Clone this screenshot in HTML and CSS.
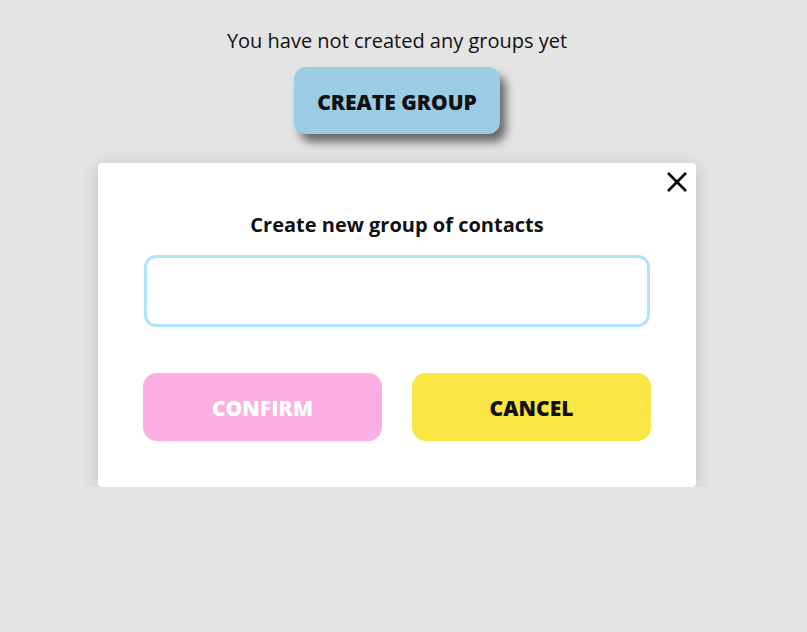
FILE: index.html
```html
<!DOCTYPE html>
<html>
<head>
<meta charset="utf-8">
<link rel="stylesheet" href="styles.css">
</head>
<body>
<main class="page">
  <p class="empty">You have not created any groups yet</p>
  <button class="create-btn">CREATE GROUP</button>
  <div class="modal">
    <button class="close" aria-label="Close">
      <svg width="22" height="22" viewBox="0 0 22 22"><path d="M2 2 L20 20 M20 2 L2 20" stroke="#000" stroke-width="2.6" fill="none"/></svg>
    </button>
    <h2 class="title">Create new group of contacts</h2>
    <input class="name-input" type="text">
    <div class="actions">
      <button class="btn confirm">CONFIRM</button>
      <button class="btn cancel">CANCEL</button>
    </div>
  </div>
</main>
</body>
</html>
```
FILE: styles.css
```css
html, body {
  margin: 0;
  padding: 0;
  background: #e4e4e4;
  font-family: "Open Sans", "Noto Sans", sans-serif;
}
.page {
  width: 794px;
  display: flex;
  flex-direction: column;
  align-items: center;
  padding-top: 27px;
}
.empty {
  margin: 0;
  font-size: 20px;
  line-height: 28px;
  color: #111;
}
.create-btn {
  margin-top: 12px;
  width: 206px;
  height: 67px;
  border: none;
  border-radius: 12px;
  background: #9acce6;
  font-family: inherit;
  font-weight: 800;
  font-size: 21px;
  padding-top: 3px;
  color: #111;
  box-shadow: 6px 8px 10px rgba(0,0,0,0.55);
}
.modal {
  position: relative;
  margin-top: 29px;
  width: 598px;
  height: 324px;
  box-sizing: border-box;
  background: #fff;
  border-radius: 4px;
  box-shadow: 0 3px 18px rgba(0,0,0,0.16);
  display: flex;
  flex-direction: column;
  align-items: center;
  padding-top: 48px;
}
.close {
  position: absolute;
  top: 8px;
  right: 8px;
  border: none;
  background: none;
  padding: 0;
  width: 22px;
  height: 22px;
}
.title {
  margin: 0;
  font-size: 20px;
  font-weight: 700;
  line-height: 28px;
  color: #111;
}
.name-input {
  margin-top: 16px;
  width: 506px;
  height: 72px;
  box-sizing: border-box;
  border: 3px solid #aee4fc;
  border-radius: 12px;
  outline: none;
}
.actions {
  margin-top: 46px;
  width: 508px;
  display: flex;
  justify-content: space-between;
}
.btn {
  width: 239px;
  height: 68px;
  border: none;
  border-radius: 14px;
  font-family: inherit;
  font-weight: 800;
  font-size: 21px;
  padding-top: 3px;
}
.confirm {
  background: #fdafe3;
  color: #fff;
}
.cancel {
  background: #f9e544;
  color: #111;
}
```
